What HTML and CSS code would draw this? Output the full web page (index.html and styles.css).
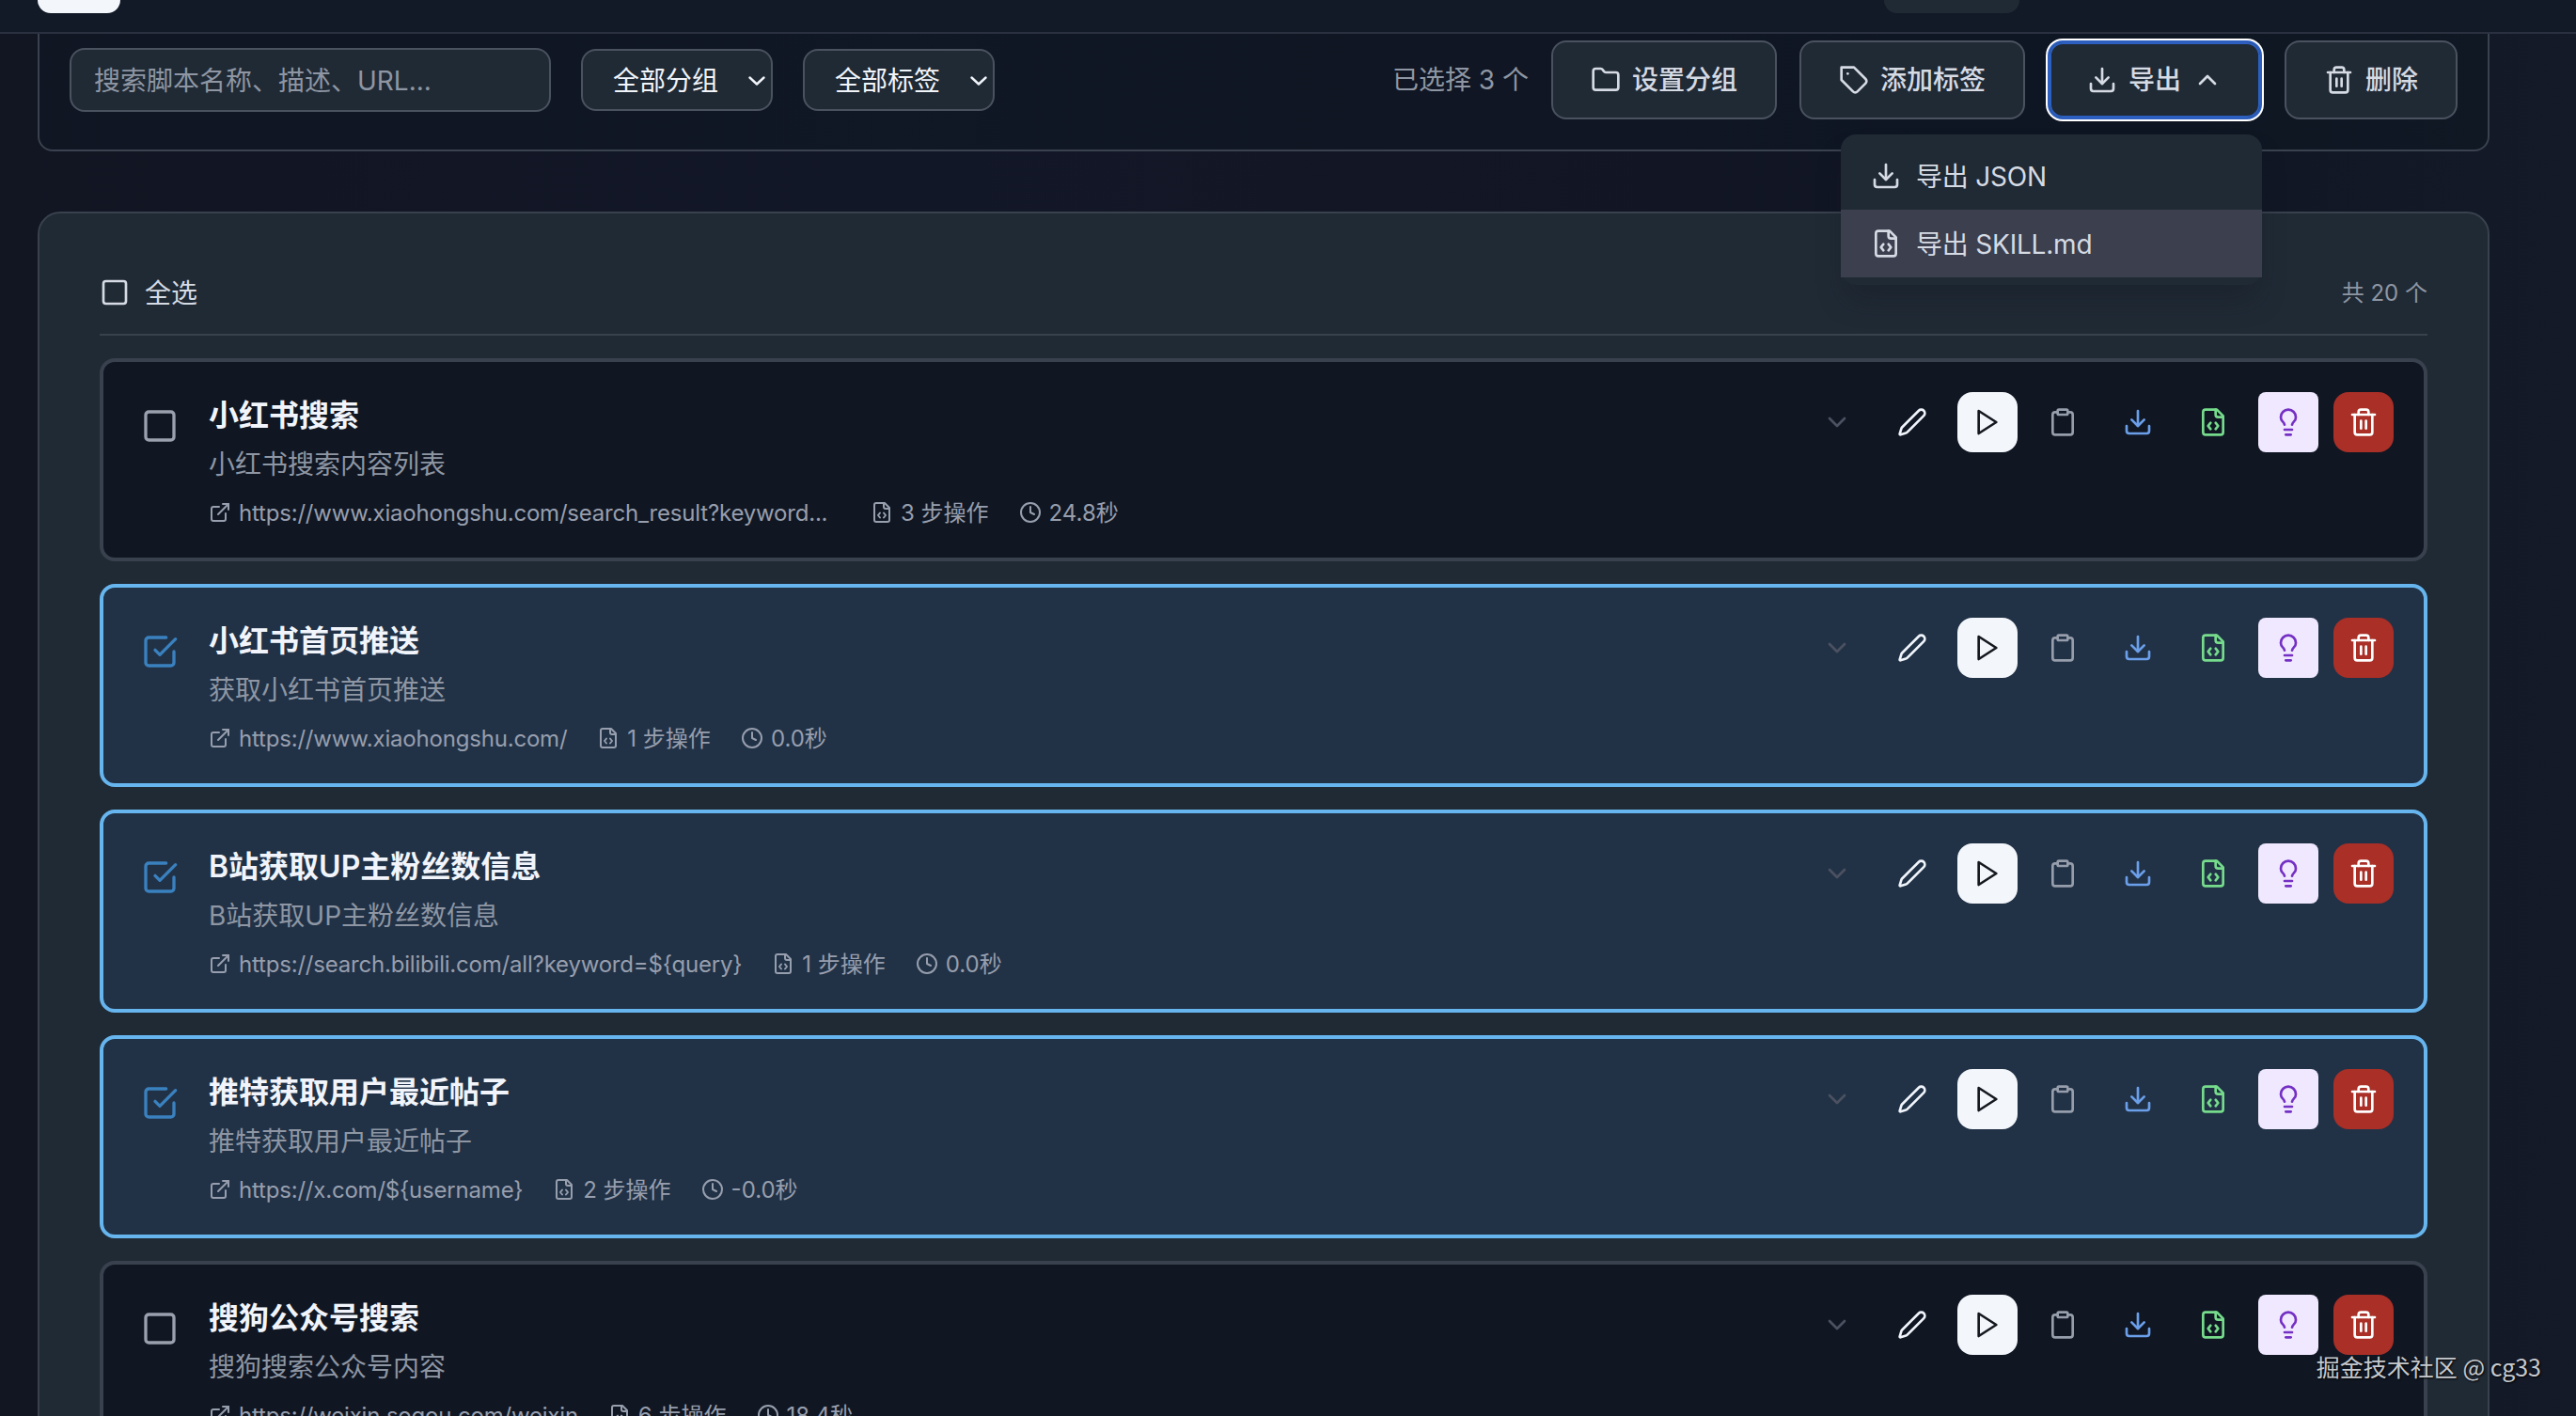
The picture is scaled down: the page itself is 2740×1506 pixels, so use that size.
FILE: index.html
```html
<!DOCTYPE html>
<html lang="zh-CN">
  <head>
    <meta charset="utf-8">
    <title>脚本管理</title>
    <link rel="stylesheet" href="styles.css">
  </head>
  <body>
    <svg class="sprite">
      <symbol id="i-square" viewBox="0 0 24 24"><rect x="3" y="3" width="18" height="18" rx="2"/></symbol>
      <symbol id="i-checked" viewBox="0 0 24 24"><path d="m9 11 3 3L22 4"/><path d="M21 12v7a2 2 0 0 1-2 2H5a2 2 0 0 1-2-2V5a2 2 0 0 1 2-2h11"/></symbol>
      <symbol id="i-folder" viewBox="0 0 24 24"><path d="M20 20a2 2 0 0 0 2-2V8a2 2 0 0 0-2-2h-7.9a2 2 0 0 1-1.69-.9L9.6 3.9A2 2 0 0 0 7.93 3H4a2 2 0 0 0-2 2v13a2 2 0 0 0 2 2Z"/></symbol>
      <symbol id="i-tag" viewBox="0 0 24 24"><path d="M12 2H2v10l9.29 9.29c.94.94 2.48.94 3.42 0l6.58-6.58c.94-.94.94-2.48 0-3.42L12 2Z"/><path d="M7 7h.01"/></symbol>
      <symbol id="i-download" viewBox="0 0 24 24"><path d="M21 15v4a2 2 0 0 1-2 2H5a2 2 0 0 1-2-2v-4"/><path d="m7 10 5 5 5-5"/><path d="M12 15V3"/></symbol>
      <symbol id="i-up" viewBox="0 0 24 24"><path d="m18 15-6-6-6 6"/></symbol>
      <symbol id="i-down" viewBox="0 0 24 24"><path d="m6 9 6 6 6-6"/></symbol>
      <symbol id="i-trash" viewBox="0 0 24 24"><path d="M3 6h18"/><path d="M19 6v14a2 2 0 0 1-2 2H7a2 2 0 0 1-2-2V6"/><path d="M8 6V4a2 2 0 0 1 2-2h4a2 2 0 0 1 2 2v2"/><path d="M10 11v6"/><path d="M14 11v6"/></symbol>
      <symbol id="i-file" viewBox="0 0 24 24"><path d="M10 12.5 8 15l2 2.5"/><path d="m14 12.5 2 2.5-2 2.5"/><path d="M14 2v4a2 2 0 0 0 2 2h4"/><path d="M15 2H6a2 2 0 0 0-2 2v16a2 2 0 0 0 2 2h12a2 2 0 0 0 2-2V7z"/></symbol>
      <symbol id="i-link" viewBox="0 0 24 24"><path d="M15 3h6v6"/><path d="M10 14 21 3"/><path d="M18 13v6a2 2 0 0 1-2 2H5a2 2 0 0 1-2-2V8a2 2 0 0 1 2-2h6"/></symbol>
      <symbol id="i-clock" viewBox="0 0 24 24"><circle cx="12" cy="12" r="10"/><path d="M12 6v6l4 2"/></symbol>
      <symbol id="i-pen" viewBox="0 0 24 24"><path d="M21.174 6.812a1 1 0 0 0-3.986-3.987L3.842 16.174a2 2 0 0 0-.5.83l-1.321 4.352a.5.5 0 0 0 .623.622l4.353-1.32a2 2 0 0 0 .83-.497z"/></symbol>
      <symbol id="i-play" viewBox="0 0 24 24"><path d="m5 3 14 9-14 9z"/></symbol>
      <symbol id="i-clipboard" viewBox="0 0 24 24"><rect x="8" y="2" width="8" height="4" rx="1"/><path d="M16 4h2a2 2 0 0 1 2 2v14a2 2 0 0 1-2 2H6a2 2 0 0 1-2-2V6a2 2 0 0 1 2-2h2"/></symbol>
      <symbol id="i-bulb" viewBox="0 0 24 24"><path d="M15 14c.2-1 .7-1.7 1.5-2.5 1-.9 1.5-2.2 1.5-3.5A6 6 0 0 0 6 8c0 1 .2 2.2 1.5 3.5.7.7 1.3 1.5 1.5 2.5"/><path d="M9 18h6"/><path d="M10 22h4"/></symbol>
    </svg>

    <header class="topbar">
      <div class="logo"></div>
      <div class="chip"></div>
    </header>

    <main>
      <section class="toolbar">
        <input class="search" type="text" placeholder="搜索脚本名称、描述、URL...">
        <button class="select">全部分组 <svg viewBox="0 0 18 10"><path d="m1.5 1.5 7.5 7 7.5-7"/></svg></button>
        <button class="select">全部标签 <svg viewBox="0 0 18 10"><path d="m1.5 1.5 7.5 7 7.5-7"/></svg></button>
        <div class="bulk">
          <span class="count">已选择 3 个</span>
          <button class="btn"><svg><use href="#i-folder"/></svg>设置分组</button>
          <button class="btn"><svg><use href="#i-tag"/></svg>添加标签</button>
          <div class="export">
            <button class="btn focused"><svg><use href="#i-download"/></svg>导出<svg><use href="#i-up"/></svg></button>
            <div class="menu">
              <div class="menu-item"><svg><use href="#i-download"/></svg><span>导出 JSON</span></div>
              <div class="menu-item active"><svg><use href="#i-file"/></svg><span>导出 SKILL.md</span></div>
            </div>
          </div>
          <button class="btn"><svg><use href="#i-trash"/></svg>删除</button>
        </div>
      </section>

      <section class="list">
        <div class="list-head">
          <label><svg><use href="#i-square"/></svg><span>全选</span></label>
          <span class="total">共 20 个</span>
        </div>
        <div id="scripts"></div>
      </section>
    </main>

    <div class="watermark">掘金技术社区 @ cg33</div>

    <script>
      const scripts = [
        { name: "小红书搜索", desc: "小红书搜索内容列表", url: "https://www.xiaohongshu.com/search_result?keyword...", steps: 3, time: "24.8", long: true },
        { name: "小红书首页推送", desc: "获取小红书首页推送", url: "https://www.xiaohongshu.com/", steps: 1, time: "0.0", selected: true },
        { name: "B站获取UP主粉丝数信息", desc: "B站获取UP主粉丝数信息", url: "https://search.bilibili.com/all?keyword=${query}", steps: 1, time: "0.0", selected: true },
        { name: "推特获取用户最近帖子", desc: "推特获取用户最近帖子", url: "https://x.com/${username}", steps: 2, time: "-0.0", selected: true },
        { name: "搜狗公众号搜索", desc: "搜狗搜索公众号内容", url: "https://weixin.sogou.com/weixin", steps: 6, time: "18.4" },
      ]
      const actions = ["down", "pen", "play", "clipboard", "download", "file", "bulb", "trash"]

      const icon = (name) => `<svg><use href="#i-${name}"/></svg>`

      document.getElementById("scripts").innerHTML = scripts.map((s) => `
        <article class="item ${s.selected ? "selected" : ""}">
          <div class="check">${icon(s.selected ? "checked" : "square")}</div>
          <div class="info">
            <h3>${s.name}</h3>
            <p>${s.desc}</p>
            <div class="meta">
              <div>${icon("link")}<span class="url ${s.long ? "long" : ""}">${s.url}</span></div>
              <div>${icon("file")}<span>${s.steps} 步操作</span></div>
              <div>${icon("clock")}<span>${s.time}秒</span></div>
            </div>
          </div>
          <div class="actions">
            ${actions.map((a) => `<button class="act ${a}">${icon(a)}</button>`).join("")}
          </div>
        </article>`).join("")
    </script>
  </body>
</html>
```
FILE: styles.css
```css
* {
  box-sizing: border-box;
  margin: 0;
  padding: 0;
}
html {
  overflow: hidden;
}
body {
  height: 1506px;
  overflow: hidden;
  position: relative;
  background: linear-gradient(90deg, #121522 0%, #121728 35%, #131624 55%, #101624 85%, #141a28 100%);
  color: #d5dae3;
  font-family: Inter, "Noto Sans CJK SC", sans-serif;
  font-size: 28px;
  line-height: 40px;
}
button, input {
  font: inherit;
  color: inherit;
}
svg {
  width: 32px;
  height: 32px;
  flex: none;
  fill: none;
  stroke: currentColor;
  stroke-width: 2;
  stroke-linecap: round;
  stroke-linejoin: round;
}
.sprite {
  display: none;
}
.topbar {
  position: relative;
  z-index: 1;
  display: flex;
  justify-content: space-between;
  height: 36px;
  padding: 0 592px 0 40px;
  background: #131a27;
  border-bottom: 2px solid #2b3040;
}
.logo {
  width: 88px;
  height: 14px;
  background: #f3f6fb;
  border-radius: 0 0 16px 16px;
}
.chip {
  width: 144px;
  height: 14px;
  background: #202a35;
  border-radius: 0 0 16px 16px;
}
main {
  padding: 0 92px 0 40px;
}
.toolbar {
  display: flex;
  align-items: center;
  gap: 32px;
  margin-top: -27px;
  padding: 32px;
  background: rgba(15, 23, 35, 0.6);
  border: 2px solid #3b424f;
  border-radius: 16px;
}
.search {
  width: 512px;
  height: 68px;
  padding: 1px 24px 0;
  background: #202a35;
  border: 2px solid #4a525f;
  border-radius: 16px;
}
.search::placeholder {
  color: #8e96a3;
}
.select {
  display: flex;
  align-items: center;
  justify-content: space-between;
  width: 204px;
  height: 66px;
  padding: 1px 6px 0 32px;
  background: #202a35;
  border: 2px solid #4a525f;
  border-radius: 16px;
  color: #f1f5fa;
}
.select svg {
  width: 18px;
  height: 10px;
  stroke-width: 2.4;
}
.bulk {
  display: flex;
  align-items: center;
  gap: 24px;
  margin-left: auto;
}
.count {
  color: #8e96a3;
}
.btn {
  display: flex;
  align-items: center;
  gap: 12px;
  height: 84px;
  padding: 0 40px;
  background: #202a35;
  border: 2px solid #4a525f;
  border-radius: 16px;
  font-weight: 500;
}
.btn.focused {
  border-color: #2c5fc0;
  box-shadow: 0 0 0 2px #fff, inset 0 0 0 2px #2c5fc0;
}
.export {
  position: relative;
}
.menu {
  position: absolute;
  z-index: 2;
  top: 100px;
  right: 0;
  width: 448px;
  padding: 8px 0;
  background: #202a35;
  border-radius: 16px;
  box-shadow: 0 20px 30px -6px rgba(17, 22, 34, 0.35);
  letter-spacing: -0.2px;
}
.menu-item {
  display: flex;
  align-items: center;
  gap: 16px;
  height: 72px;
  padding: 0 32px;
}
.menu-item span {
  padding-top: 2px;
}
.menu-item.active {
  background: #3b3f4e;
}
.list {
  margin-top: 64px;
  padding: 64px;
  background: #202a35;
  border: 2px solid #38414d;
  border-radius: 24px;
}
.list-head {
  display: flex;
  justify-content: space-between;
  height: 66px;
  border-bottom: 2px solid #38414d;
}
.list-head label {
  display: flex;
  align-items: center;
  gap: 16px;
  height: 40px;
}
.list-head label span {
  padding-top: 1px;
}
.total {
  padding-top: 1px;
  font-size: 24px;
  color: #8e96a3;
}
.item {
  display: flex;
  align-items: flex-start;
  height: 216px;
  margin-top: 24px;
  padding: 32px 32px 32px 40px;
  background: #101723;
  border: 4px solid #38414d;
  border-radius: 16px;
}
.item.selected {
  background: #213247;
  border-color: #66b5ee;
}
.check {
  margin: 16px 32px 0 0;
  height: 40px;
  color: #9aa0ad;
}
.check svg {
  width: 40px;
  height: 40px;
}
.selected .check {
  color: #3a81bf;
}
.info {
  flex: 1;
}
.info h3 {
  font-size: 32px;
  font-weight: 600;
  line-height: 50px;
  color: #f1f5fb;
}
.info p {
  margin: 7px 0 15px;
  color: #8e96a3;
}
.meta {
  display: flex;
  gap: 32px;
  font-size: 24px;
  line-height: 30px;
  color: #979ead;
}
.meta div {
  display: flex;
  align-items: center;
  gap: 8px;
}
.meta span {
  padding-top: 2px;
}
.meta svg {
  width: 24px;
  height: 24px;
}
.url {
  letter-spacing: -0.2px;
}
.url.long {
  width: 640px;
}
.actions {
  display: flex;
  gap: 16px;
}
.act {
  display: flex;
  align-items: center;
  justify-content: center;
  width: 64px;
  height: 64px;
  background: none;
  border: none;
  border-radius: 16px;
}
.act.down {
  color: #4b5160;
}
.act.pen {
  color: #f1f5fb;
}
.act.play {
  background: #f3f6fa;
  color: #15181f;
}
.act.clipboard {
  color: #969dab;
}
.act.download {
  color: #6b9fea;
}
.act.file {
  color: #76dc8c;
}
.act.bulb {
  background: #f0e8fe;
  border-radius: 8px;
  color: #7430c4;
}
.act.trash {
  background: #a92f27;
  color: #fff;
}
.watermark {
  position: absolute;
  right: 37px;
  bottom: 34px;
  font-family: "Noto Sans CJK SC", sans-serif;
  font-size: 25px;
  line-height: 38px;
  color: #c6c9ce;
  text-shadow: 1px 1px 2px #000;
}
```
